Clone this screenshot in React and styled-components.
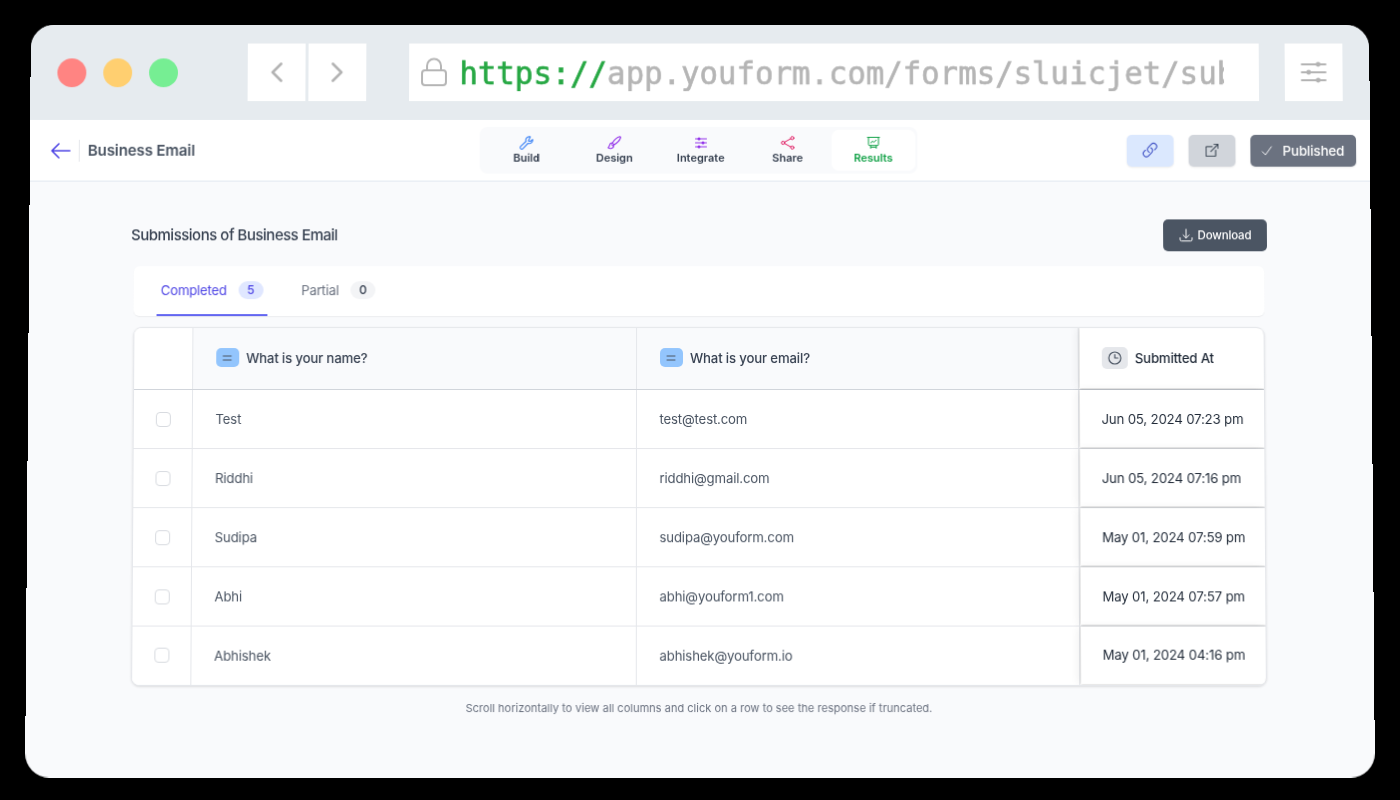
import React from 'react';
import styled, { createGlobalStyle } from 'styled-components';
import { BsBoxArrowUpRight } from 'react-icons/bs';

const GlobalStyle = createGlobalStyle`
  * { box-sizing: border-box; }
  body { margin: 0; background: #000; font-family: Inter, sans-serif; }
`;

const Stage = styled.div`
  height: 800px;
  width: 1400px;
  display: flex;
  align-items: center;
  justify-content: center;
  background: #000;
  overflow: hidden;
`;

const Window = styled.div`
  width: 1344px;
  height: 753px;
  display: flex;
  flex-direction: column;
  border-radius: 24px;
  overflow: hidden;
  background: #f9fafc;
  transform: translateY(-1px) perspective(1500px) rotateX(1deg);
`;

const BrowserBar = styled.div`
  flex: none;
  height: 96px;
  display: flex;
  align-items: center;
  padding: 0 26px 0 26.5px;
  background: #e6ebef;
`;

const Lights = styled.div`
  display: flex;
  gap: 17px;
  width: 191.5px;
`;

const Light = styled.span`
  width: 29px;
  height: 29px;
  border-radius: 50%;
  background: ${(p) => p.$color};
`;

const NavGroup = styled.div`
  display: flex;
  gap: 3px;
  width: 162px;
`;

const BarButton = styled.div`
  width: 58px;
  height: 58px;
  display: flex;
  align-items: center;
  justify-content: center;
  background: #fff;
  color: #b3b3b3;
`;

const AddressBar = styled.div`
  width: 853px;
  height: 58px;
  margin-right: 26px;
  padding: 0 35px 0 11px;
  display: flex;
  align-items: center;
  background: #fff;
  color: #b5b5b5;
`;

const Address = styled.div`
  flex: 1;
  min-width: 0;
  margin-left: 11.5px;
  overflow: hidden;
  white-space: nowrap;
  font-family: "DejaVu Sans Mono", monospace;
  font-size: 30.8px;
  line-height: 44px;
  -webkit-text-stroke: 0.6px;
  transform: scaleY(1.05);
`;

const Scheme = styled.span`
  color: #27a844;
`;

const AppHeader = styled.header`
  flex: none;
  height: 62px;
  display: grid;
  grid-template-columns: 451px 439px 1fr;
  align-items: center;
  padding: 0 14px 1px 0;
  border-bottom: 1px solid #e2e8f0;
  background: #fff;
`;

const Crumb = styled.div`
  display: flex;
  align-items: center;
  padding: 1px 0 0 21px;
  color: #4f46e5;
`;

const FormName = styled.div`
  margin-left: 8px;
  padding-left: 8px;
  line-height: 22px;
  border-left: 1px solid #e5e7eb;
  font-size: 15.2px;
  letter-spacing: -0.18px;
  font-weight: 600;
  color: #4b5563;
`;

const Tabs = styled.nav`
  height: 47px;
  display: flex;
  padding: 3px 2px;
  border-radius: 8px;
  background: #f9fafc;
`;

const Tab = styled.div`
  width: ${(p) => p.$width}px;
  display: flex;
  flex-direction: column;
  align-items: center;
  padding-top: 6px;
  gap: 1px;
  border-radius: 7px;
  background: ${(p) => (p.$active ? '#fff' : 'transparent')};
  color: ${(p) => (p.$active ? '#16a34a' : '#374151')};
  font-size: 11px;
  font-weight: 600;
  line-height: 14px;
  svg { color: ${(p) => p.$icon}; }
`;

const Actions = styled.div`
  display: flex;
  justify-content: flex-end;
  gap: 15px;
  padding-top: 1px;
`;

const Action = styled.div`
  width: ${(p) => p.$width}px;
  height: 32px;
  display: flex;
  align-items: center;
  justify-content: center;
  gap: 10px;
  border-radius: 5px;
  box-shadow: 0 1px 2px rgba(0, 0, 0, 0.08);
  background: ${(p) => p.$bg};
  color: ${(p) => p.$fg};
  font-size: 13.4px;
  letter-spacing: -0.12px;
  font-weight: 500;
`;

const Content = styled.main`
  padding: 38px 104px 0 102px;
`;

const TitleRow = styled.div`
  height: 32px;
  display: flex;
  align-items: center;
  justify-content: space-between;
`;

const Title = styled.h1`
  margin: 0 0 2px;
  font-size: 15px;
  letter-spacing: -0.49px;
  font-weight: 450;
  color: #374151;
`;

const Download = styled.div`
  width: 104px;
  height: 32px;
  display: flex;
  align-items: center;
  justify-content: center;
  gap: 5px;
  border-radius: 5px;
  background: #4b5563;
  color: #fff;
  font-size: 11.5px;
  letter-spacing: -0.15px;
  font-weight: 500;
`;

const Filter = styled.div`
  height: 50px;
  margin: 14.5px 3px 0;
  padding-left: 23px;
  display: flex;
  gap: 30px;
  border-radius: 6px;
  background: #fff;
  box-shadow: 0 1px 1px rgba(0, 0, 0, 0.06);
`;

const FilterTab = styled.div`
  height: 50px;
  display: flex;
  align-items: center;
  padding: 0 4px;
  gap: 11.5px;
  border-bottom: 2px solid ${(p) => (p.$active ? '#6366f1' : 'transparent')};
  color: ${(p) => (p.$active ? '#4f46e5' : '#6b7280')};
  font-size: 13.2px;
  letter-spacing: -0.2px;
`;

const Count = styled.span`
  width: 25px;
  line-height: 18px;
  border-radius: 9px;
  text-align: center;
  font-size: 12px;
  font-weight: 500;
  background: ${(p) => (p.$active ? '#e0e7ff' : '#f3f4f6')};
  color: ${(p) => (p.$active ? '#4f46e5' : '#374151')};
`;

const TableShadow = styled.div`
  filter: drop-shadow(0 1px 1px rgba(0, 0, 0, 0.12));
`;

const Table = styled.div`
  width: 1132px;
  margin: 11px 0 0 2.5px;
  border: 1px solid #e5e7eb;
  border-radius: 8px;
  overflow: hidden;
  background: #fff;
`;

const Row = styled.div`
  height: ${(p) => (p.$head ? 62.5 : 59)}px;
  display: grid;
  grid-template-columns: 59.5px 444px 442px 1fr;
  border-bottom: 1px solid ${(p) => (p.$head ? '#d1d5db' : '#e5e7eb')};
  &:last-child { border-bottom: 0; height: 57.5px; }
`;

const Cell = styled.div`
  display: flex;
  align-items: center;
  padding: 0 0 ${(p) => (p.$head ? 1 : 0)}px 22.500px;
  border-right: 1px solid #e5e7eb;
  background: ${(p) => (p.$head ? '#f9fafc' : '#fff')};
  color: ${(p) => (p.$head ? '#374151' : '#4b5563')};
  font-size: 13.2px;
  letter-spacing: -0.16px;
  font-weight: ${(p) => (p.$head ? 500 : 400)};
`;

const StickyCell = styled.div`
  margin: 0 0 1px 1px;
  display: flex;
  align-items: center;
  padding-left: 21.5px;
  background: #fff;
  box-shadow: 0 0 2px rgba(0, 0, 0, 0.2), -3px 0 8px rgba(0, 0, 0, 0.06);
  color: #1f2937;
  font-size: 13.2px;
  letter-spacing: -0.16px;
  font-weight: ${(p) => (p.$head ? 500 : 400)};
`;

const Check = styled.span`
  width: 15px;
  height: 15px;
  margin-left: -0.5px;
  border: 1px solid #d8dbe0;
  border-radius: 4px;
`;

const TypeBadge = styled.span`
  width: ${(p) => p.$width}px;
  height: ${(p) => p.$height}px;
  margin-right: 7.5px;
  display: flex;
  align-items: center;
  justify-content: center;
  border-radius: 5px;
  background: ${(p) => p.$bg};
  color: #4b5563;
`;

const Hint = styled.p`
  margin: 13px 0 0;
  text-align: center;
  font-size: 11px;
  letter-spacing: 0.01px;
  line-height: 18px;
  color: #6b7280;
`;

const Svg = ({ w, h = w, box = '0 0 24 24', sw = 1.5, children }) => (
  <svg width={w} height={h} viewBox={box} fill="none" stroke="currentColor" strokeWidth={sw} strokeLinecap="round" strokeLinejoin="round">
    {children}
  </svg>
);

const SlidersIcon = () => (
  <Svg w={26} h={22} box="0 0 26 22" sw={1.8}>
    <path d="M1 3h24M1 11h24M1 19h24" />
    <g fill="currentColor" stroke="none">
      <circle cx="17.5" cy="3" r="2.4" /><circle cx="8" cy="11" r="2.4" /><circle cx="17.5" cy="19" r="2.4" />
    </g>
  </Svg>
);

const WrenchIcon = () => (
  <Svg w={14} box="0 0 14 14" sw={1.1}>
    <path d="M9.6.9a3.4 3.4 0 0 0-3.1 4.6L1.1 10.600a1.6 1.6 0 0 0 2.3 2.3l5.1-5.4a3.4 3.4 0 0 0 4.6-3.9L11 5.5 8.9 5.100 10.800.9z" />
  </Svg>
);

const BrushIcon = () => (
  <Svg w={14} box="0 0 14 14" sw={1.1}>
    <path d="M5.2 7.2C7 4.2 10 1.4 12.6.8c1 0 .9.8.6 1.4C12.3 4.6 9.6 7.4 6.8 9zM5.2 7.2c-1.7-.3-2.6.7-2.9 2.2-.2 1.2-.6 2-1.5 2.5 2 1.7 5.8 1 6-2.9M4.6 8.800l1 1" />
  </Svg>
);

const AdjustIcon = () => (
  <Svg w={12} h={14} box="0 0 12 14" sw={1}>
    <path d="M.5 3h11M.5 7h11M.5 11h11" />
    <g fill="currentColor" stroke="none">
      <circle cx="4" cy="3" r="1.5" /><circle cx="8" cy="7" r="1.5" /><circle cx="4" cy="11" r="1.5" />
    </g>
  </Svg>
);

const ShareIcon = () => (
  <Svg w={14} box="0 0 14 14" sw={1}>
    <path d="M3.8 6.3l6.2-3.4M3.8 7.7l6.2 3.4" />
    <circle cx="2.3" cy="7" r="1.6" /><circle cx="11.5" cy="2.2" r="1.6" /><circle cx="11.5" cy="11.8" r="1.6" />
  </Svg>
);

const BoardIcon = () => (
  <Svg w={14} h={14} box="0 0 14 14" sw={1}>
    <path d="M1 1.5h12M2 1.5v7.2a1 1 0 0 0 1 1h8a1 1 0 0 0 1-1V1.5M4.2 9.8v2.7M9.8 9.8v2.7M4.3 11.4h5.4M4.3 7l1.8-1.6 1.3 1L9.7 4.3" />
  </Svg>
);

const TextIcon = () => (
  <Svg w={10} h={8} box="0 0 10 8" sw={1}>
    <path d="M1 2h8M1 6h8" />
  </Svg>
);

const rows = [
  ['Test', 'test@test.com', 'Jun 05, 2024 07:23 pm'],
  ['Riddhi', 'riddhi@gmail.com', 'Jun 05, 2024 07:16 pm'],
  ['Sudipa', 'sudipa@youform.com', 'May 01, 2024 07:59 pm'],
  ['Abhi', 'abhi@youform1.com', 'May 01, 2024 07:57 pm'],
  ['Abhishek', 'abhishek@youform.io', 'May 01, 2024 04:16 pm'],
];

export default function App() {
  return (
    <Stage>
      <GlobalStyle />
      <Window>
        <BrowserBar>
          <Lights>
            <Light $color="#ff8482" />
            <Light $color="#ffcf70" />
            <Light $color="#76ee93" />
          </Lights>
          <NavGroup>
            <BarButton><Svg w={12} h={20} box="0 0 12 20" sw={2.6}><path d="M10.5 1.5 2 10l8.5 8.5" /></Svg></BarButton>
            <BarButton><Svg w={12} h={20} box="0 0 12 20" sw={2.6}><path d="m1.5 1.5 8.5 8.5-8.5 8.5" /></Svg></BarButton>
          </NavGroup>
          <AddressBar>
            <Svg w={28} h={30} box="0 0 28 30" sw={2}>
              <rect x="2" y="13" width="24" height="15" rx="3" />
              <path d="M7 13V8.5a7 7 0 0 1 14 0V13" />
            </Svg>
            <Address><Scheme>https://</Scheme>app.youform.com/forms/sluicjet/sub</Address>
          </AddressBar>
          <BarButton><SlidersIcon /></BarButton>
        </BrowserBar>
        <AppHeader>
          <Crumb>
            <Svg w={20} h={16} box="0 0 20 16" sw={1.6}><path d="M19 8H1M8 1 1 8l7 7" /></Svg>
            <FormName>Business Email</FormName>
          </Crumb>
          <Tabs>
            <Tab $width={90} $icon="#3b82f6"><WrenchIcon />Build</Tab>
            <Tab $width={86.5} $icon="#9333ea"><BrushIcon />Design</Tab>
            <Tab $width={86.5} $icon="#9333ea"><AdjustIcon />Integrate</Tab>
            <Tab $width={87.5} $icon="#e11d63"><ShareIcon />Share</Tab>
            <Tab $width={84.5} $icon="#16a34a" $active><BoardIcon />Results</Tab>
          </Tabs>
          <Actions>
            <Action $width={46.5} $bg="#dbe8fe" $fg="#3f51c5">
              <Svg w={16.5} sw={1.6}>
                <path d="M13.19 8.688a4.5 4.5 0 0 1 1.242 7.244l-4.5 4.5a4.5 4.5 0 0 1-6.364-6.364l1.757-1.757m13.35-.622 1.757-1.757a4.5 4.5 0 0 0-6.364-6.364l-4.5 4.5a4.5 4.5 0 0 0 1.242 7.244" />
              </Svg>
            </Action>
            <Action $width={47} $bg="#d1d5db" $fg="#374151"><BsBoxArrowUpRight size={13} strokeWidth={0.3} /></Action>
            <Action $width={106.5} $bg="#6b7280" $fg="#fff">
              <Svg w={11} h={10} box="0 0 12 11" sw={1}><path d="m1 6.5 3.5 3.5L11 1" /></Svg>
              Published
            </Action>
          </Actions>
        </AppHeader>
        <Content>
          <TitleRow>
            <Title>Submissions of Business Email</Title>
            <Download>
              <Svg w={14} box="0 0 14 14" sw={1}><path d="M7 1v8.5M4 6.700l3 3 3-3M1 9.500v1.7a1.5 1.5 0 0 0 1.5 1.5h9a1.5 1.5 0 0 0 1.5-1.5V9.5" /></Svg>
              Download
            </Download>
          </TitleRow>
          <Filter>
            <FilterTab $active>Completed<Count $active>5</Count></FilterTab>
            <FilterTab>Partial<Count>0</Count></FilterTab>
          </Filter>
          <TableShadow>
            <Table>
              <Row $head>
                <Cell />
                <Cell $head><TypeBadge $width={23} $height={19} $bg="#93c5fd"><TextIcon /></TypeBadge>What is your name?</Cell>
                <Cell $head><TypeBadge $width={23} $height={19} $bg="#93c5fd"><TextIcon /></TypeBadge>What is your email?</Cell>
                <StickyCell $head>
                  <TypeBadge $width={26} $height={22} $bg="#e5e7eb">
                    <Svg w={14} box="0 0 14 14" sw={1.2}><circle cx="7" cy="7" r="6" /><path d="M7 3.5V7h3" /></Svg>
                  </TypeBadge>
                  Submitted At
                </StickyCell>
              </Row>
              {rows.map(([name, email, date]) => (
                <Row key={email}>
                  <Cell><Check /></Cell>
                  <Cell>{name}</Cell>
                  <Cell>{email}</Cell>
                  <StickyCell>{date}</StickyCell>
                </Row>
              ))}
            </Table>
          </TableShadow>
          <Hint>Scroll horizontally to view all columns and click on a row to see the response if truncated.</Hint>
        </Content>
      </Window>
    </Stage>
  );
}
